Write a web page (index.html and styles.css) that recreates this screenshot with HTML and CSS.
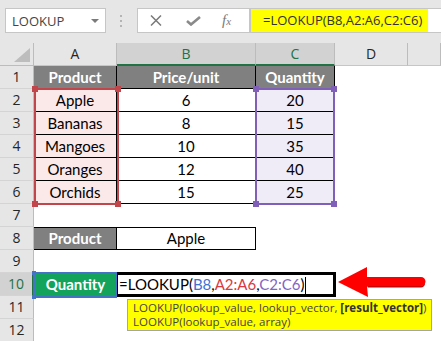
FILE: index.html
```html
<!DOCTYPE html>
<html lang="en">
<head>
    <meta charset="UTF-8">
    <title>LOOKUP</title>
    <link rel="stylesheet" href="styles.css">
</head>
<body>
    <!-- formula bar -->
    <div class="bar">
        <div class="namebox">
            <span>LOOKUP</span>
            <span class="dd"></span>
        </div>
        <div class="grip">
            <svg width="3" height="12" viewBox="0 0 3 12"><rect x="0" y="0" width="2" height="2" fill="#b4b4b4"/><rect x="0" y="5" width="2" height="2" fill="#b4b4b4"/><rect x="0" y="10" width="2" height="2" fill="#b4b4b4"/></svg>
        </div>
        <div class="fbtns">
            <svg class="ico-x" width="12" height="11" viewBox="0 0 12 11"><path d="M1 0.5 L11 10.5 M11 0.5 L1 10.5" stroke="#7a7a7a" stroke-width="1.5" fill="none"/></svg>
            <svg class="ico-ok" width="15" height="10" viewBox="0 0 15 10"><path d="M1 5 L5 8.5 L14 1" stroke="#8a8a8a" stroke-width="2.6" fill="none"/></svg>
            <span class="fx"><i>f</i><i class="x">x</i></span>
        </div>
        <div class="finput">
            <span class="fhl">=LOOKUP(B8,A2:A6,C2:C6)</span>
        </div>
    </div>

    <!-- worksheet -->
    <div class="sheet">
        <div class="corner"></div>
        <div class="ch">A</div>
        <div class="ch on">B</div>
        <div class="ch on">C</div>
        <div class="ch">D</div>
        <div class="ch"></div>

        <div class="rh">1</div>
        <div class="c hd">Product</div>
        <div class="c hd">Price/unit</div>
        <div class="c hd">Quantity</div>

        <div class="rh">2</div>
        <div class="c bd pk">Apple</div>
        <div class="c bd">6</div>
        <div class="c bd lv">20</div>

        <div class="rh">3</div>
        <div class="c bd pk">Bananas</div>
        <div class="c bd">8</div>
        <div class="c bd lv">15</div>

        <div class="rh">4</div>
        <div class="c bd pk">Mangoes</div>
        <div class="c bd">10</div>
        <div class="c bd lv">35</div>

        <div class="rh">5</div>
        <div class="c bd pk">Oranges</div>
        <div class="c bd">12</div>
        <div class="c bd lv">40</div>

        <div class="rh">6</div>
        <div class="c bd pk">Orchids</div>
        <div class="c bd">15</div>
        <div class="c bd lv">25</div>

        <div class="rh">7</div>

        <div class="rh">8</div>
        <div class="c hd t">Product</div>
        <div class="c bd t">Apple</div>

        <div class="rh">9</div>

        <div class="rh on">10</div>
        <div class="c qty">Quantity</div>
        <div class="c edit">=LOOKUP(<span class="r-b">B8</span>,<span class="r-r">A2:A6</span>,<span class="r-p">C2:C6</span>)<span class="caret"></span></div>

        <div class="rh">11</div>
        <div class="rh">12</div>

        <!-- range highlights -->
        <div class="rng red"><span class="h tl"></span><span class="h tr"></span><span class="h bl"></span><span class="h br"></span></div>
        <div class="rng pur"><span class="h tl"></span><span class="h tr"></span><span class="h bl"></span><span class="h br"></span></div>
        <div class="rng blue"><span class="h tl"></span><span class="h bl"></span></div>

        <!-- arrow callout -->
        <svg class="arrow" width="92" height="36" viewBox="0 0 92 36">
            <path d="M2 18 L31 3 L31 13 L85 13 A4.5 4.5 0 0 1 85 22 L31 22 L32 33 Z" fill="#ff0000"/>
            <path d="M31 22 L85 22 A4.5 4.5 0 0 0 89 19 L89 20 A4.5 4.5 0 0 1 85 23.5 L32 23.5 Z" fill="#c80000"/>
        </svg>

        <!-- function tooltip -->
        <div class="tip">
            <div>LOOKUP(lookup_value, lookup_vector, <b>[result_vector]</b>)</div>
            <div>LOOKUP(lookup_value, array)</div>
        </div>
    </div>
</body>
</html>
```

FILE: styles.css
```css
body {
    margin: 0;
    width: 441px;
    height: 341px;
    overflow: hidden;
    background-color: #fff;
    font-family: "Open Sans", "Noto Sans", sans-serif;
    color: #262626;
}

/* formula bar */
.bar {
    height: 43px;
    box-sizing: border-box;
    padding-top: 8px;
    background-color: #e6e6e6;
    display: flex;
    align-items: flex-start;
}
.namebox {
    margin-left: 5px;
    width: 101px;
    height: 25px;
    box-sizing: border-box;
    background-color: #fff;
    border: 1px solid #c6c6c6;
    display: flex;
    align-items: center;
    padding-left: 6px;
    font-size: 13px;
    color: #444;
}
.namebox .dd {
    margin-left: auto;
    margin-right: 6px;
    border-left: 4px solid transparent;
    border-right: 4px solid transparent;
    border-top: 4px solid #7a7a7a;
}
.grip {
    width: 31px;
    display: flex;
    justify-content: center;
    padding-top: 7px;
}
.fbtns {
    width: 113px;
    height: 25px;
    box-sizing: border-box;
    background-color: #fff;
    border: 1px solid #c6c6c6;
    display: flex;
    align-items: center;
}
.ico-x {
    margin-left: 12px;
}
.ico-ok {
    margin-left: 24px;
}
.fx {
    margin-left: 21px;
    font-family: "Liberation Serif", serif;
    font-size: 15px;
    color: #7a7a7a;
    line-height: 1;
}
.fx .x {
    font-size: 11px;
}
.finput {
    flex: 1;
    height: 25px;
    box-sizing: border-box;
    background-color: #fff;
    border: 1px solid #c6c6c6;
    border-right: none;
}
.fhl {
    display: block;
    width: 177px;
    height: 100%;
    box-sizing: border-box;
    padding-left: 12px;
    background-color: #ffff00;
    font-size: 13px;
    line-height: 23px;
    color: #333;
}

/* sheet grid */
.sheet {
    position: relative;
    display: grid;
    grid-template-columns: 34px 83px 139px 79px 73px 1fr;
    grid-template-rows: repeat(13, 23px);
}
.corner {
    background-color: #e6e6e6;
    border-right: 1px solid #bcbcbc;
    border-bottom: 1px solid #bcbcbc;
    display: flex;
    justify-content: flex-end;
    align-items: flex-end;
    padding: 0 3px 3px 0;
}
.corner::after {
    content: "";
    border-left: 16px solid transparent;
    border-bottom: 14px solid #bdbdbd;
}
.ch {
    background-color: #e6e6e6;
    border-right: 1px solid #bcbcbc;
    border-bottom: 1px solid #c6c6c6;
    font-size: 14px;
    line-height: 22px;
    text-align: center;
}
.ch.on {
    background-color: #d2d2d2;
    color: #217346;
    border-bottom: 2px solid #217346;
}
.rh {
    grid-column: 1;
    background-color: #e6e6e6;
    border-right: 1px solid #bcbcbc;
    border-bottom: 1px solid #d4d4d4;
    font-size: 14px;
    line-height: 22px;
    text-align: center;
}
.rh.on {
    background-color: #d2d2d2;
    color: #217346;
    border-right: 2px solid #217346;
}

.c {
    box-sizing: border-box;
    font-family: Lato, "Liberation Sans", sans-serif;
    font-size: 15px;
    line-height: 22px;
    text-align: center;
    white-space: nowrap;
    color: #000;
}
.hd {
    background-color: #808080;
    color: #fff;
    font-weight: bold;
    border-right: 1px solid #000;
    border-bottom: 1px solid #000;
}
.bd {
    border-right: 1px solid #000;
    border-bottom: 1px solid #000;
}
.t {
    border-top: 1px solid #000;
    line-height: 21px;
}
.pk {
    background-color: #fbe9e9;
}
.lv {
    background-color: #efebf7;
}
.qty {
    background-color: #14a35a;
    color: #fff;
    font-weight: bold;
}
.edit {
    grid-column: span 2;
    position: relative;
    z-index: 2;
    margin: -1px -1px -1px -2px;
    border: 3px solid #000;
    background-color: #fff;
    text-align: left;
    padding-left: 1px;
    line-height: 19px;
}
.r-b { color: #3d72d4; }
.r-r { color: #d9393f; }
.r-p { color: #8364c4; }
.caret {
    display: inline-block;
    width: 1px;
    height: 17px;
    margin-left: 1px;
    vertical-align: -4px;
    background-color: #000;
}

/* reference highlights drawn over the cells */
.rng {
    position: absolute;
    box-sizing: border-box;
    border: 2px solid;
    z-index: 3;
}
.rng.red {
    left: 34px;
    top: 45px;
    width: 85px;
    height: 117px;
    border-color: #c0464b;
}
.rng.pur {
    left: 255px;
    top: 45px;
    width: 80px;
    height: 117px;
    border-color: #7f5fb8;
}
.rng.blue {
    left: 33px;
    top: 229px;
    width: 84px;
    height: 26px;
    border-color: #4472c4;
}
.h {
    position: absolute;
    width: 6px;
    height: 6px;
    background-color: inherit;
}
.red .h { background-color: #c0464b; }
.pur .h { background-color: #7f5fb8; }
.blue .h { background-color: #4472c4; width: 4px; height: 4px; }
.h.tl { left: -4px; top: -4px; }
.h.tr { right: -4px; top: -4px; }
.h.bl { left: -4px; bottom: -4px; }
.h.br { right: -4px; bottom: -4px; }
.blue .h.tl { left: -3px; top: -3px; }
.blue .h.bl { left: -3px; bottom: -3px; }

.arrow {
    position: absolute;
    left: 336px;
    top: 221px;
    z-index: 4;
}

.tip {
    position: absolute;
    left: 127px;
    top: 256px;
    width: 305px;
    height: 32px;
    box-sizing: border-box;
    padding: 1px 5px;
    background-color: #ffff00;
    border: 1px solid #a6a6a6;
    font-size: 11.5px;
    line-height: 14px;
    color: #444;
    white-space: nowrap;
    z-index: 4;
}
.tip b {
    color: #333;
}
```
